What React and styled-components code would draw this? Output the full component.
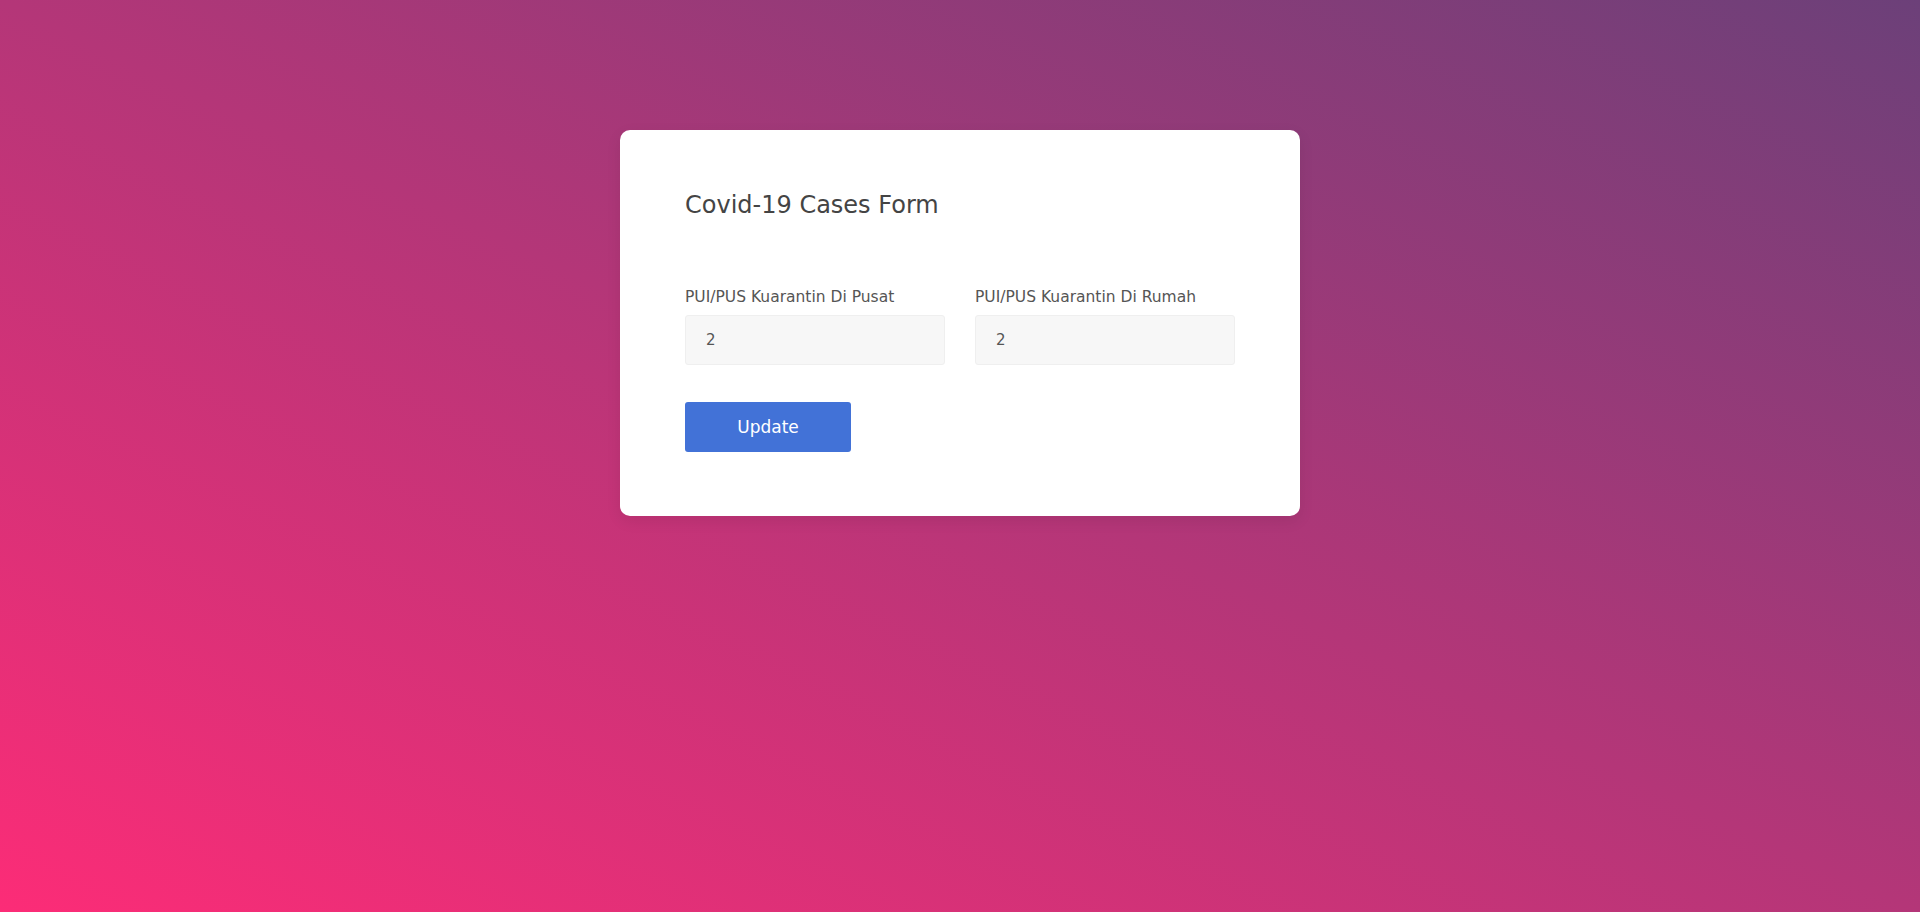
import React, { useState } from 'react';
import styled, { createGlobalStyle } from 'styled-components';

const GlobalStyle = createGlobalStyle`
    * {
        box-sizing: border-box;
    }

    html, body {
        margin: 0;
        padding: 0;
    }

    body {
        font-family: "DejaVu Sans", "Liberation Sans", sans-serif;
    }
`

const Page = styled.div`
    min-height: 100vh;
    display: flex;
    flex-direction: column;
    align-items: center;
    padding-top: 130px;
    background: linear-gradient(to top right, #fc2c77 0%, #6c4079 100%);
`

const Card = styled.form`
    width: 680px;
    background: #fff;
    border-radius: 10px;
    padding: 60px 65px 64px;
    box-shadow: 0 5px 15px rgba(0, 0, 0, .08);
`

const Title = styled.h1`
    margin: 0 0 66px;
    font-size: 24px;
    font-weight: 400;
    line-height: 30px;
    color: #444;
`

const Row = styled.div`
    display: grid;
    grid-template-columns: 1fr 1fr;
    column-gap: 30px;
`

const Field = styled.label`
    display: flex;
    flex-direction: column;
`

const Label = styled.span`
    font-size: 15.5px;
    line-height: 22px;
    color: #555;
    margin-bottom: 7px;
`

const Input = styled.input`
    height: 50px;
    padding: 0 20px;
    border: 1px solid #efefef;
    border-radius: 3px;
    background: #f7f7f7;
    font-family: inherit;
    font-size: 15px;
    color: #555;
    outline: none;
`

const Button = styled.button`
    margin-top: 37px;
    width: 166px;
    height: 50px;
    border: none;
    border-radius: 3px;
    background: #4272d7;
    color: #fff;
    font-family: inherit;
    font-size: 17px;
    cursor: pointer;
`

const App = () => {
    const [pusat, setPusat] = useState('2')
    const [rumah, setRumah] = useState('2')

    return (
        <Page>
            <GlobalStyle />
            <Card onSubmit={e => e.preventDefault()}>
                <Title>Covid-19 Cases Form</Title>
                <Row>
                    <Field>
                        <Label>PUI/PUS Kuarantin Di Pusat</Label>
                        <Input value={pusat} onChange={e => setPusat(e.target.value)} />
                    </Field>
                    <Field>
                        <Label>PUI/PUS Kuarantin Di Rumah</Label>
                        <Input value={rumah} onChange={e => setRumah(e.target.value)} />
                    </Field>
                </Row>
                <Button type="submit">Update</Button>
            </Card>
        </Page>
    )
}

export default App;
